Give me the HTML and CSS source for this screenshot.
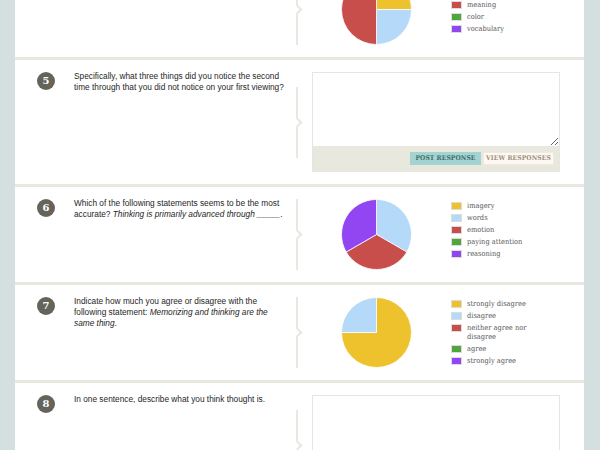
FILE: index.html
```html
<!DOCTYPE html>
<html lang="en">
<head>
<meta charset="utf-8">
<title>Questions</title>
<link rel="stylesheet" href="styles.css">
</head>
<body>
<main class="sheet">
  <section class="item">
    <div class="num">4</div>
    <p class="q">What did you notice most?</p>
    <div class="divider"></div>
    <div class="answer chart">
      <svg class="pie" viewBox="0 0 72 72" width="71" height="71">
        <path d="M36 36 L36 0.5 A35.5 35.5 0 0 1 71.5 36 Z" fill="#eec22c"/>
        <path d="M36 36 L71.5 36 A35.5 35.5 0 0 1 36 71.5 Z" fill="#b5d9f8"/>
        <path d="M36 36 L36 71.5 A35.5 35.5 0 0 1 36 0.5 Z" fill="#c84e4b"/>
      </svg>
      <ul class="legend">
        <li><span class="sw yellow"></span><span class="lbl">imagery</span></li>
        <li><span class="sw blue"></span><span class="lbl">words</span></li>
        <li><span class="sw red"></span><span class="lbl">meaning</span></li>
        <li><span class="sw green"></span><span class="lbl">color</span></li>
        <li><span class="sw purple"></span><span class="lbl">vocabulary</span></li>
      </ul>
    </div>
  </section>

  <section class="item">
    <div class="num">5</div>
    <p class="q">Specifically, what three things did you notice the second time through that you did not notice on your first viewing?</p>
    <div class="divider"></div>
    <div class="answer response">
      <textarea class="field"></textarea>
      <div class="bar">
        <button class="btn post">POST RESPONSE</button>
        <button class="btn view">VIEW RESPONSES</button>
      </div>
    </div>
  </section>

  <section class="item">
    <div class="num">6</div>
    <p class="q">Which of the following statements seems to be the most accurate? <em>Thinking is primarily advanced through&nbsp;_____</em>.</p>
    <div class="divider"></div>
    <div class="answer chart">
      <svg class="pie" viewBox="0 0 72 72" width="71" height="71">
        <path d="M36 36 L36 0.5 A35.5 35.5 0 0 1 66.74 53.75 Z" fill="#b5d9f8"/>
        <path d="M36 36 L66.74 53.75 A35.5 35.5 0 0 1 5.26 53.75 Z" fill="#c84e4b"/>
        <path d="M36 36 L5.26 53.75 A35.5 35.5 0 0 1 36 0.5 Z" fill="#9146f1"/>
      </svg>
      <ul class="legend">
        <li><span class="sw yellow"></span><span class="lbl">imagery</span></li>
        <li><span class="sw blue"></span><span class="lbl">words</span></li>
        <li><span class="sw red"></span><span class="lbl">emotion</span></li>
        <li><span class="sw green"></span><span class="lbl">paying attention</span></li>
        <li><span class="sw purple"></span><span class="lbl">reasoning</span></li>
      </ul>
    </div>
  </section>

  <section class="item">
    <div class="num">7</div>
    <p class="q">Indicate how much you agree or disagree with the following statement: <em>Memorizing and thinking are the same thing</em>.</p>
    <div class="divider"></div>
    <div class="answer chart">
      <svg class="pie" viewBox="0 0 72 72" width="71" height="71">
        <path d="M36 36 L36 0.5 A35.5 35.5 0 1 1 0.5 36 Z" fill="#eec22c"/>
        <path d="M36 36 L0.5 36 A35.5 35.5 0 0 1 36 0.5 Z" fill="#b5d9f8"/>
      </svg>
      <ul class="legend">
        <li><span class="sw yellow"></span><span class="lbl">strongly disagree</span></li>
        <li><span class="sw blue"></span><span class="lbl">disagree</span></li>
        <li><span class="sw red"></span><span class="lbl">neither agree nor disagree</span></li>
        <li><span class="sw green"></span><span class="lbl">agree</span></li>
        <li><span class="sw purple"></span><span class="lbl">strongly agree</span></li>
      </ul>
    </div>
  </section>

  <section class="item">
    <div class="num">8</div>
    <p class="q">In one sentence, describe what you think thought is.</p>
    <div class="divider"></div>
    <div class="answer response">
      <textarea class="field"></textarea>
      <div class="bar">
        <button class="btn post">POST RESPONSE</button>
        <button class="btn view">VIEW RESPONSES</button>
      </div>
    </div>
  </section>
</main>
</body>
</html>
```

FILE: styles.css
```css
html, body {
  margin: 0;
  padding: 0;
}

body {
  background: #d4e0e0;
  font-family: "Liberation Sans", Arial, sans-serif;
  height: 450px;
  overflow: hidden;
}

.sheet {
  margin: -38px 16px 0 15px;
  background: #ffffff;
}

.item {
  display: flex;
  align-items: flex-start;
  padding: 12px 0 12px 22px;
  border-bottom: 3px solid #e8e8df;
}

.num {
  flex: none;
  width: 18px;
  height: 18px;
  margin-top: -0.5px;
  border-radius: 50%;
  background: #65645a;
  color: #ffffff;
  font: bold 10px/18px "DejaVu Serif", serif;
  text-align: center;
}

.q {
  flex: none;
  width: 211px;
  margin: -1.5px 0 0 19px;
  font-size: 8.3px;
  line-height: 11px;
  color: #262626;
}

.divider {
  flex: none;
  align-self: center;
  position: relative;
  width: 2px;
  height: 71px;
  margin-left: 11px;
  background: #e8e8e0;
}

.divider::after {
  content: "";
  position: absolute;
  left: -2px;
  top: 32px;
  width: 5px;
  height: 5px;
  background: #ffffff;
  border-top: 2px solid #e8e8e0;
  border-right: 2px solid #e8e8e0;
  transform: rotate(45deg);
}

.answer {
  flex: none;
  width: 248px;
  margin-left: 14px;
}

.chart {
  display: flex;
  align-items: flex-start;
}

.pie {
  flex: none;
  display: block;
  margin-left: 29px;
}

.pie path {
  stroke: #ffffff;
  stroke-width: 0.8;
}

.legend {
  list-style: none;
  margin: 2px 0 0 39px;
  padding: 0;
}

.legend li {
  display: flex;
  align-items: flex-start;
  gap: 5px;
  margin-bottom: 3px;
  font: 7.4px/9px "DejaVu Serif Condensed", "DejaVu Serif", serif;
  color: #585858;
}

.sw {
  flex: none;
  width: 9px;
  height: 6px;
  margin-top: 1px;
  border: 1px solid #dcdcdc;
}

.lbl {
  max-width: 64px;
}

.yellow { background: #eec22c; }
.blue { background: #b5d9f8; }
.red { background: #c84e4b; }
.green { background: #4ea63c; }
.purple { background: #9146f1; }

.response {
  border: 1px solid #e6e6e0;
  box-sizing: border-box;
}

.field {
  display: block;
  width: 100%;
  height: 73px;
  margin: 0;
  padding: 4px;
  border: 0;
  box-sizing: border-box;
  resize: vertical;
  background: #ffffff;
  font-family: "Liberation Sans", Arial, sans-serif;
}

.bar {
  height: 25px;
  background: #e8e8df;
  display: flex;
  justify-content: flex-end;
  align-items: center;
  gap: 2px;
  padding-right: 5px;
}

.btn {
  width: 71px;
  height: 13px;
  padding: 0;
  border: 0;
  text-align: center;
  font: bold 6.7px/13px "DejaVu Serif Condensed", "DejaVu Serif", serif;
  letter-spacing: 0.1px;
}

.post {
  background: #a4d4d2;
  color: #3d6e6b;
}

.view {
  background: #fdf8f2;
  color: #a08f80;
  box-shadow: inset 0 0 0 1px #f1e9df;
}
```
